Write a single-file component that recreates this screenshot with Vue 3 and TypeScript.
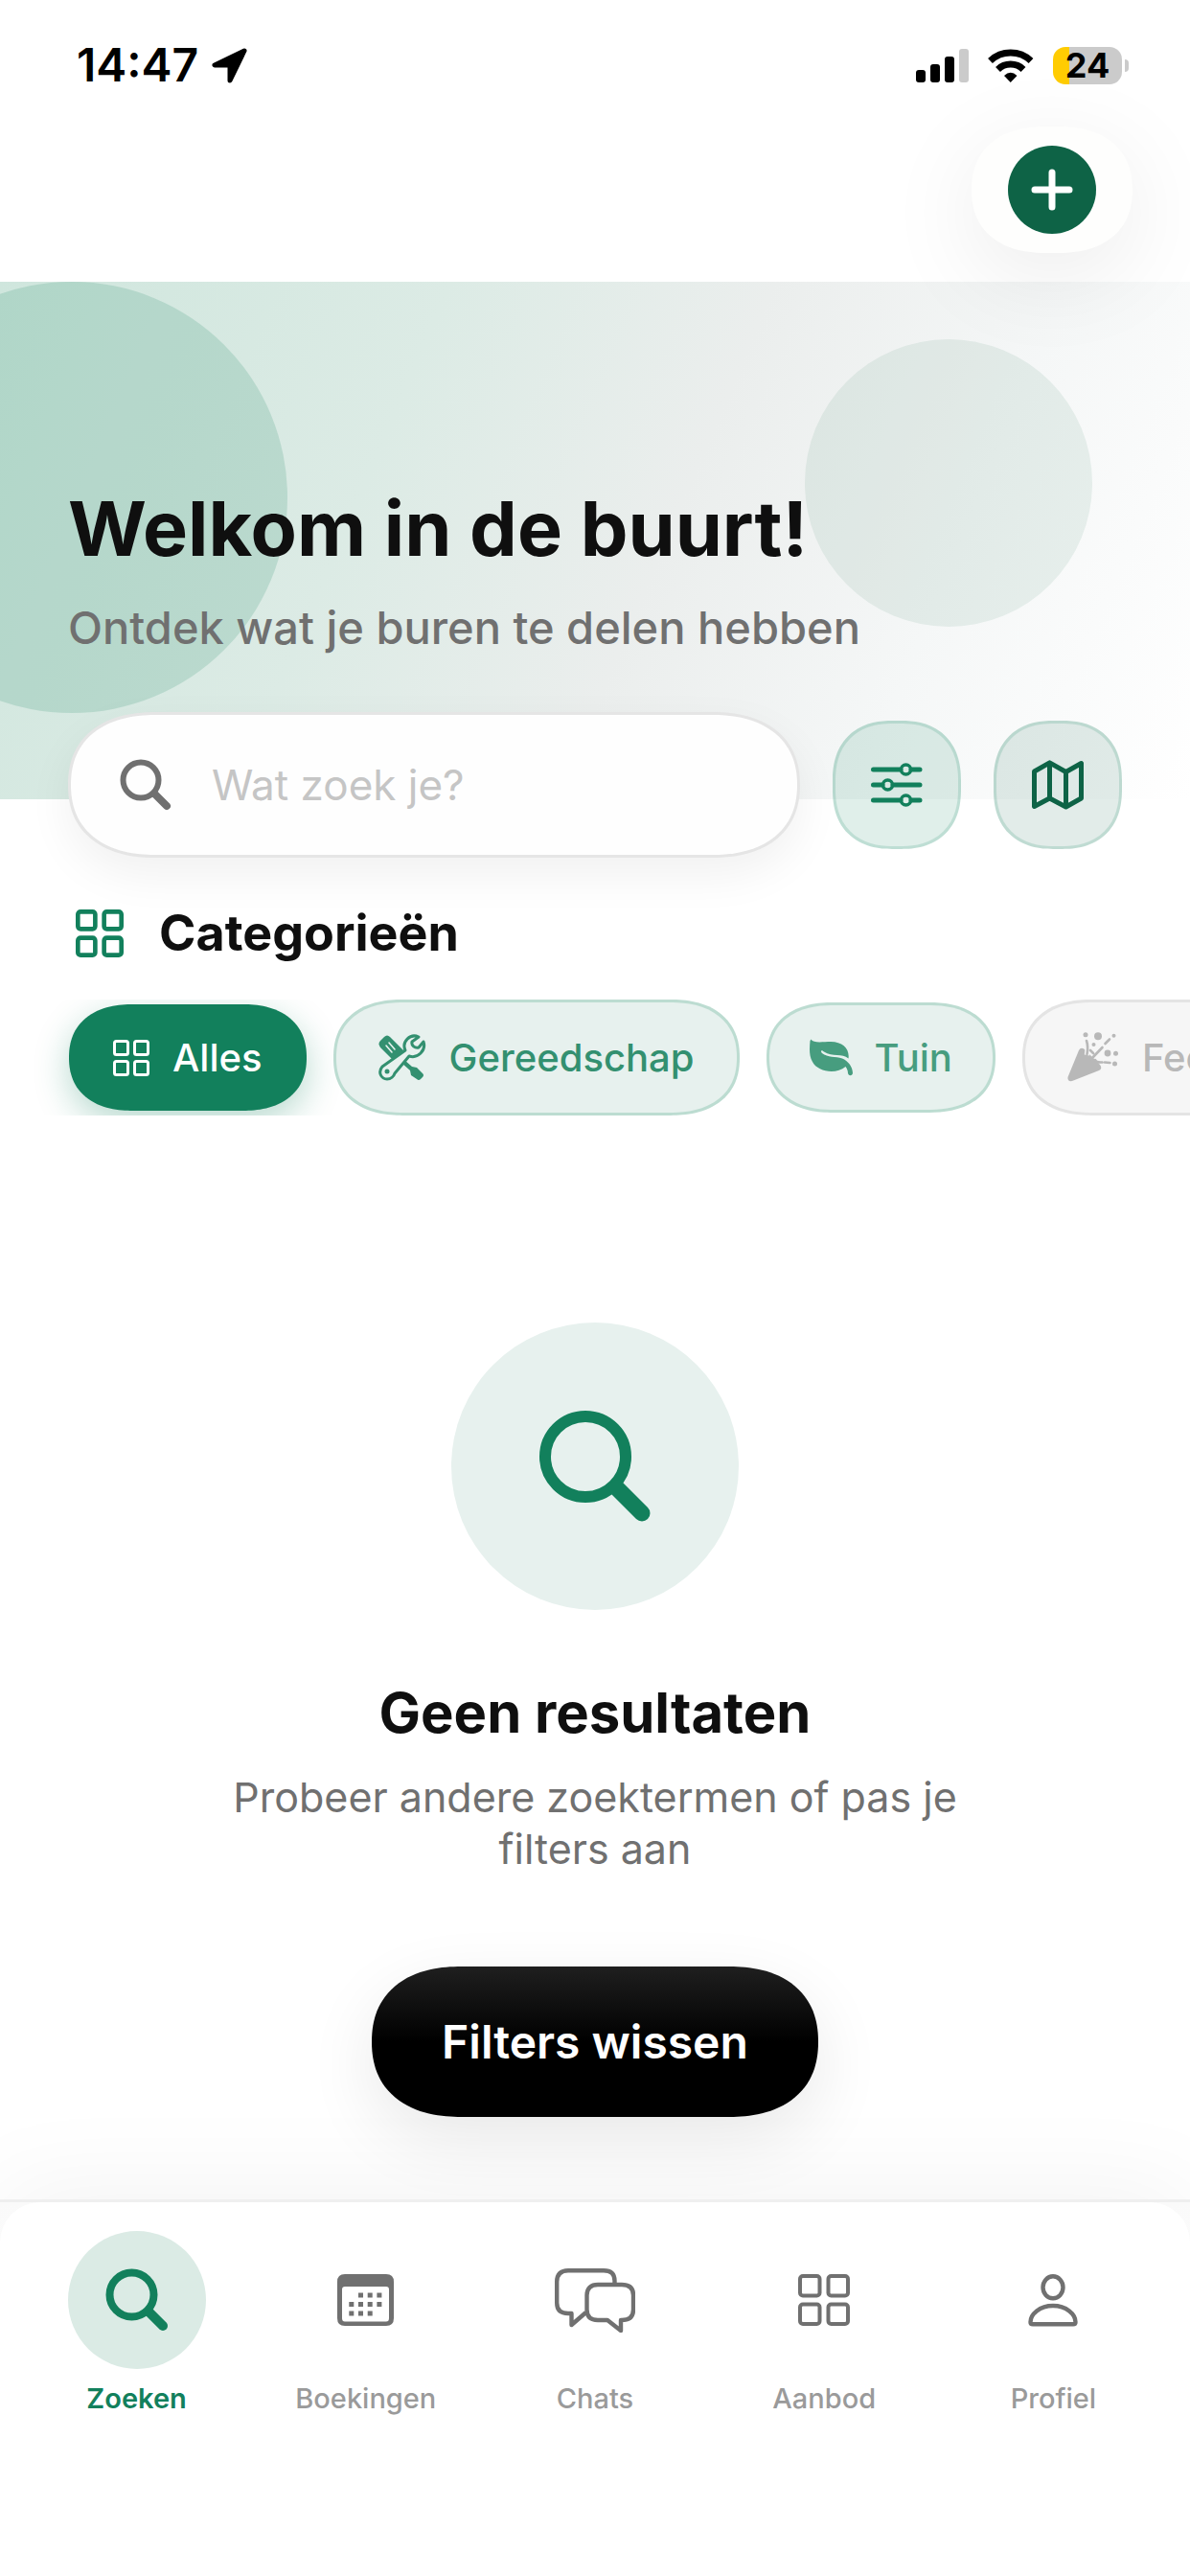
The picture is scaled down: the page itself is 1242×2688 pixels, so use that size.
<script setup lang="ts">
import { ref } from 'vue'

type Tone = 'active' | 'strong' | 'soft' | 'muted'
interface Chip { id: string; label: string; tone: Tone }
interface Tab { id: string; label: string }

const chips: Chip[] = [
  { id: 'all', label: 'Alles', tone: 'active' },
  { id: 'tools', label: 'Gereedschap', tone: 'strong' },
  { id: 'garden', label: 'Tuin', tone: 'soft' },
  { id: 'party', label: 'Feest', tone: 'muted' },
]

const tabs: Tab[] = [
  { id: 'search', label: 'Zoeken' },
  { id: 'bookings', label: 'Boekingen' },
  { id: 'chats', label: 'Chats' },
  { id: 'offers', label: 'Aanbod' },
  { id: 'profile', label: 'Profiel' },
]

const query = ref('')
const currentTab = ref('search')
</script>

<template>
  <div class="app">
    <div class="status">
      <div class="status-left">
        <span class="time">14:47</span>
        <svg width="37" height="37" viewBox="0 0 37 37" aria-hidden="true">
          <path d="M34 3 3 18H19V34Z" fill="#000" stroke="#000" stroke-width="5" stroke-linejoin="round" />
        </svg>
      </div>
      <div class="status-right">
        <svg width="55" height="36" viewBox="0 0 55 36" aria-hidden="true">
          <rect x="0" y="23" width="10" height="13" rx="3" />
          <rect x="15" y="17" width="10" height="19" rx="3" />
          <rect x="30" y="9" width="10" height="27" rx="3" />
          <rect x="45" y="1" width="10" height="35" rx="3" fill="#cbcbcb" />
        </svg>
        <svg width="48" height="37" viewBox="0 0 48 37" aria-hidden="true">
          <g fill="none" stroke="#000" stroke-width="7">
            <path d="M2.500 13.500A31 31 0 0 1 45 13.500" />
            <path d="M10.500 22.500A19 19 0 0 1 37 22.500" />
          </g>
          <path d="M17 29Q23.700 22.500 30.500 29L23.700 36Z" />
        </svg>
        <div class="battery"><span class="level">24</span></div>
      </div>
    </div>

    <header class="topbar">
      <button class="add" type="button" aria-label="Toevoegen">
        <span class="add-disc">
          <svg width="44" height="44" viewBox="0 0 44 44" aria-hidden="true">
            <path d="M22 4V40M4 22H40" stroke="#fff" stroke-width="7" stroke-linecap="round" />
          </svg>
        </span>
      </button>
    </header>

    <main class="main">
      <section class="hero">
        <span class="blob blob-left"></span>
        <span class="blob blob-right"></span>
        <h1>Welkom in de buurt!</h1>
        <p class="lead">Ontdek wat je buren te delen hebben</p>
        <form class="search-row" @submit.prevent>
          <label class="search" for="query">
            <svg width="54" height="54" viewBox="0 0 54 54" aria-hidden="true">
              <circle cx="22" cy="22" r="18.500" fill="none" stroke="#707070" stroke-width="6" />
              <path d="M37 37 49 49" stroke="#707070" stroke-width="8" stroke-linecap="round" />
            </svg>
            <input id="query" v-model="query" type="text" placeholder="Wat zoek je?" aria-label="Zoeken" />
          </label>
          <button class="square square-filter" type="button" aria-label="Filters">
            <svg width="54" height="46" viewBox="0 0 54 46" aria-hidden="true">
              <g fill="none" stroke="#12805c" stroke-width="5" stroke-linecap="round">
                <path d="M2.500 7H31M42 7H51M2.500 23H12M23 23H51M2.500 39H31M42 39H51" />
                <g stroke-width="3.500">
                  <circle cx="36.500" cy="7" r="5" />
                  <circle cx="17.500" cy="23" r="5" />
                  <circle cx="36.500" cy="39" r="5" />
                </g>
              </g>
            </svg>
          </button>
          <button class="square square-map" type="button" aria-label="Kaart">
            <svg width="54" height="52" viewBox="0 0 54 52" aria-hidden="true">
              <path d="M2.500 12 18.500 2.800 35.500 12.500 51.500 3.500V40L35.500 49 18.500 40 2.500 48.500ZM18.500 3V40M35.500 12V49" fill="none" stroke="#0e6346" stroke-width="5" stroke-linejoin="round" />
            </svg>
          </button>
        </form>
      </section>

      <section class="categories">
        <h2>
          <svg width="50" height="50" viewBox="0 0 54 54" aria-hidden="true">
            <g fill="none" stroke="#12805c" stroke-width="5">
              <rect x="2.500" y="2.500" width="19.500" height="19.500" rx="3" />
              <rect x="32" y="2.500" width="19.500" height="19.500" rx="3" />
              <rect x="2.500" y="32" width="19.500" height="19.500" rx="3" />
              <rect x="32" y="32" width="19.500" height="19.500" rx="3" />
            </g>
          </svg>
          <span>Categorieën</span>
        </h2>
        <div class="chips">
          <button v-for="chip in chips" :key="chip.id" type="button" class="chip" :class="chip.tone">
            <svg v-if="chip.id === 'all'" width="38" height="38" viewBox="0 0 38 38" aria-hidden="true">
              <g fill="none" stroke="currentColor" stroke-width="3">
                <rect x="1.500" y="1.500" width="14" height="14" rx="2" />
                <rect x="22.500" y="1.500" width="14" height="14" rx="2" />
                <rect x="1.500" y="22.500" width="14" height="14" rx="2" />
                <rect x="22.500" y="22.500" width="14" height="14" rx="2" />
              </g>
            </svg>
            <svg v-else-if="chip.id === 'tools'" width="50" height="49" viewBox="0 0 50 49" aria-hidden="true">
              <path d="M2 7 6 3Q9 0 12 3L26 17 15 27 2 14Q-1 10 2 7Z" fill="currentColor" />
              <path d="M8 12 14 19M11 9 17 16" stroke="#e7f1ee" stroke-width="1.600" stroke-linecap="round" />
              <path d="M27 27 35 34 40 35 46 41Q48 43 46 45L44 47Q42 49 40 47L34 43 33 38 24 30Z" fill="currentColor" />
              <path d="M42 3C33-1 24 8 28 17L4 34C-1 40 3 47 9 47 13 47 16 44 17 41L32 23C41 26 50 17 47 8L42 14C38 15 34 12 35 8Z" fill="#e7f1ee" stroke="currentColor" stroke-width="3" stroke-linejoin="round" />
              <circle cx="9" cy="39" r="2.500" fill="currentColor" />
            </svg>
            <svg v-else-if="chip.id === 'garden'" width="46" height="39" viewBox="0 0 46 39" aria-hidden="true">
              <path d="M1.500.5C4 5 14 3 22 3 35 3 42 11 40.500 20.500 34 15 24 19 15 13.500 12 11 11 13 13 15 19 20 27 18 34 20.500 40 23 45 29 45 36 44 39 41 39 40 36 40 33 39 31 37.500 29 27 38 8 34 3 24-1 17 0 9 .5 2Z" fill="currentColor" />
            </svg>
            <svg v-else width="54" height="53" viewBox="0 0 54 53" aria-hidden="true">
              <path d="M12 19Q14 15 18 18L34 34Q37 38 33 40L5 51Q0 52 .5 47Z" fill="currentColor" />
              <path d="M20 8.500Q22 14 20.500 24" fill="none" stroke="#f6f6f6" stroke-width="5.500" />
              <g fill="none" stroke="currentColor" stroke-width="2.600" stroke-linecap="round">
                <path d="M20 9Q22 15 20.500 23M24 19 27 22M25 28 36.500 16M39.500 12 44 7.500M29 29Q30 32 36.500 31.500M39 31.500 44.500 32" />
              </g>
              <g fill="currentColor">
                <circle cx="19" cy="2.800" r="2.500" /><circle cx="32" cy="4.200" r="4" />
                <circle cx="48.500" cy="3.800" r="2" /><circle cx="27.500" cy="13" r="2" />
                <circle cx="42" cy="22" r="3.400" /><circle cx="50.500" cy="22.300" r="2.500" />
                <circle cx="49.500" cy="33" r="2.500" />
              </g>
            </svg>
            <span>{{ chip.label }}</span>
          </button>
        </div>
      </section>

      <section class="empty">
        <div class="empty-disc">
          <svg width="118" height="118" viewBox="0 0 118 118" aria-hidden="true">
            <circle cx="49" cy="49" r="42" fill="none" stroke="#12805c" stroke-width="12" />
            <path d="M82 82 108 108" stroke="#12805c" stroke-width="17" stroke-linecap="round" />
          </svg>
        </div>
        <h3>Geen resultaten</h3>
        <p>Probeer andere zoektermen of pas je filters aan</p>
        <button class="clear" type="button">Filters wissen</button>
      </section>
    </main>

    <nav class="tabbar">
      <div class="tabs">
        <button
          v-for="tab in tabs" :key="tab.id" type="button" class="tab"
          :class="{ current: tab.id === currentTab }" @click="currentTab = tab.id"
        >
          <span class="tab-icon">
            <svg v-if="tab.id === 'search'" width="66" height="66" viewBox="0 0 66 66" aria-hidden="true">
              <circle cx="27.500" cy="27.500" r="23" fill="none" stroke="currentColor" stroke-width="8" />
              <path d="M46 46 60 60" stroke="currentColor" stroke-width="10" stroke-linecap="round" />
            </svg>
            <svg v-else-if="tab.id === 'bookings'" width="59" height="54" viewBox="0 0 59 54" aria-hidden="true">
              <path fill-rule="evenodd" d="M8 0H51Q59 0 59 8V46Q59 54 51 54H8Q0 54 0 46V8Q0 0 8 0ZM8 13Q5 13 5 16V46Q5 49.500 8 49.500H51Q54 49.500 54 46V16Q54 13 51 13Z" fill="currentColor" />
              <g fill="none" stroke="currentColor" stroke-width="5" stroke-dasharray="5 4.700">
                <path d="M22 22H47" /><path d="M12.300 31.500H47" /><path d="M12.300 41H37" />
              </g>
            </svg>
            <svg v-else-if="tab.id === 'chats'" width="84" height="67" viewBox="0 0 84 67" aria-hidden="true">
              <g fill="none" stroke="currentColor" stroke-width="4.400" stroke-linejoin="round">
                <path d="M62.500 15V13Q62.500 2.200 51 2.200H14Q2.200 2.200 2.200 14V36Q2.200 47 14 47H17.500V59L32.500 46" />
                <path d="M45 17H70Q82 17 82 28V43Q82 54 70 54H69V65L55 54H45Q33.500 54 33.500 43V28Q33.500 17 45 17Z" />
              </g>
            </svg>
            <svg v-else-if="tab.id === 'offers'" width="54" height="54" viewBox="0 0 54 54" aria-hidden="true">
              <g fill="none" stroke="currentColor" stroke-width="4">
                <rect x="2" y="2" width="20.500" height="20.500" rx="3" />
                <rect x="31.500" y="2" width="20.500" height="20.500" rx="3" />
                <rect x="2" y="31.500" width="20.500" height="20.500" rx="3" />
                <rect x="31.500" y="31.500" width="20.500" height="20.500" rx="3" />
              </g>
            </svg>
            <svg v-else width="52" height="55" viewBox="0 0 52 55" aria-hidden="true">
              <g fill="none" stroke="currentColor" stroke-width="4.400">
                <ellipse cx="26" cy="13.800" rx="10.500" ry="11.500" />
                <path d="M26 33C12 33 2.500 42 2.500 50Q2.500 52.300 5 52.300H47Q49.500 52.300 49.500 50C49.500 42 40 33 26 33Z" />
              </g>
            </svg>
          </span>
          <span class="tab-label">{{ tab.label }}</span>
        </button>
      </div>
    </nav>
  </div>
</template>

<style>
body { background: #fff; }
</style>

<style scoped>
.app {
  display: flex;
  flex-direction: column;
  min-height: 100vh;
  overflow: hidden;
  background: #fff;
  color: #0f0f0f;
  font-family: Inter, "Liberation Sans", sans-serif;
}
.app *, .app { box-sizing: border-box; }
button {
  border: 0;
  padding: 0;
  background: none;
  font: inherit;
  color: inherit;
  cursor: pointer;
}
svg { display: block; flex: none; }
h1, h2, h3, p { margin: 0; }

.status {
  display: flex;
  align-items: center;
  justify-content: space-between;
  height: 132px;
  padding: 4px 64px 0 80px;
}
.status-left { display: flex; align-items: center; gap: 14px; }
.time { font-size: 48px; line-height: 56px; font-weight: 600; color: #000; }
.status-right { display: flex; align-items: center; gap: 20px; }
.battery {
  position: relative;
  width: 72px;
  height: 39px;
  border-radius: 13px;
  background: linear-gradient(90deg, #ffcc02 17px, #cbcbcb 17px);
  text-align: center;
  margin-right: 7px;
}
.battery::after {
  content: "";
  position: absolute;
  left: 75px;
  top: 13px;
  width: 4px;
  height: 13px;
  border-radius: 0 6px 6px 0;
  background: #cbcbcb;
}
.level { font-size: 36px; line-height: 39px; font-weight: 700; color: #000; }

.topbar {
  position: relative;
  z-index: 1;
  display: flex;
  justify-content: flex-end;
  padding: 0 60px 30px;
}
.add {
  display: flex;
  align-items: center;
  justify-content: center;
  width: 168px;
  height: 132px;
  border-radius: 70px / 66px;
  background: #fefefd;
  box-shadow: 0 24px 100px rgba(0, 0, 0, 0.08);
}
.add-disc {
  display: flex;
  align-items: center;
  justify-content: center;
  width: 92px;
  height: 92px;
  border-radius: 50%;
  background: #0e6346;
}

.main { flex: 1; }
.hero {
  position: relative;
  padding: 207px 71px 0;
  background: linear-gradient(113deg, #cfe6dd 0%, #dcebe5 32%, #ebeeed 55%, #f5f7f7 76%, #fff 100%) 0 0 / 100% 540px no-repeat;
}
.blob { position: absolute; border-radius: 50%; }
.blob-left { left: -150px; top: 0; width: 450px; height: 450px; background: rgba(18, 128, 92, 0.16); }
.blob-right { right: 102px; top: 60px; width: 300px; height: 300px; background: rgba(14, 99, 70, 0.08); }
h1 { position: relative; font-size: 79px; line-height: 100px; font-weight: 700; white-space: nowrap; }
.lead { position: relative; margin-top: 24px; font-size: 47px; line-height: 60px; font-weight: 500; color: #707070; }
.search-row { position: relative; display: flex; align-items: center; gap: 34px; margin-top: 58px; }
.search {
  flex: 1;
  display: flex;
  align-items: center;
  gap: 42px;
  min-width: 0;
  height: 152px;
  padding: 0 51px;
  border: 3px solid #e5e5e5;
  border-radius: 80px / 76px;
  background: #fefefe;
  box-shadow: 0 18px 48px rgba(0, 0, 0, 0.06);
}
.search input {
  flex: 1;
  min-width: 0;
  border: 0;
  padding: 0;
  background: none;
  outline: none;
  font: inherit;
  font-size: 44px;
  line-height: 60px;
  color: #0f0f0f;
}
.search input::placeholder { color: #c5c5c5; opacity: 1; }
.square {
  display: flex;
  align-items: center;
  justify-content: center;
  flex: none;
  width: 134px;
  height: 134px;
  border: 3px solid rgba(18, 128, 92, 0.16);
  border-radius: 54px;
}
.square-filter { background: rgba(18, 128, 92, 0.13); }
.square-map { background: rgba(14, 99, 70, 0.12); }

.categories { padding-top: 47px; }
h2 {
  display: flex;
  align-items: center;
  gap: 37px;
  padding: 0 79px;
  font-size: 52px;
  line-height: 64px;
  font-weight: 700;
}
.chips {
  display: flex;
  align-items: center;
  gap: 28px;
  height: 121px;
  margin-top: 37px;
  padding-left: 72px;
  overflow: hidden;
}
.chip {
  display: flex;
  align-items: center;
  flex: none;
  gap: 24px;
  height: 121px;
  padding: 0 44px;
  border: 3px solid #bcdcd1;
  border-radius: 62px / 60px;
  background: #e7f1ee;
  font-size: 40px;
  line-height: 48px;
  font-weight: 500;
  white-space: nowrap;
}
.chip.active {
  height: 111px;
  padding: 0 46px;
  border: 0;
  background: #12805c;
  color: #fff;
  box-shadow: 0 12px 36px rgba(18, 128, 92, 0.3);
}
.chip.strong { color: #339070; }
.chip.soft { gap: 22px; height: 115px; padding: 0 42px; color: #479d7f; }
.chip.muted { border-color: #e4e4e4; background: #f6f6f6; color: #b8b8b8; }

.empty {
  display: flex;
  flex-direction: column;
  align-items: center;
  padding: 216px 72px 0;
  text-align: center;
}
.empty-disc {
  display: flex;
  align-items: center;
  justify-content: center;
  width: 300px;
  height: 300px;
  border-radius: 50%;
  background: #e7f1ee;
}
h3 { margin-top: 71px; font-size: 58px; line-height: 72px; font-weight: 700; }
.empty p { max-width: 800px; margin-top: 25px; font-size: 43px; line-height: 54px; color: #707070; }
.clear {
  height: 157px;
  margin-top: 96px;
  padding: 0 73px;
  border-radius: 84px / 79px;
  background: linear-gradient(#1f1f1f, #000 50%);
  box-shadow: 0 24px 72px rgba(0, 0, 0, 0.09);
  font-size: 48px;
  line-height: 60px;
  font-weight: 600;
  color: #fff;
}

.tabbar {
  border-top: 3px solid #efefef;
  background: linear-gradient(#fafafa, #fff 240px);
  box-shadow: 0 -10px 100px rgba(0, 0, 0, 0.05);
}
.tabs {
  display: flex;
  padding: 30px 23px 165px;
  border-radius: 42px 42px 0 0;
  background: #fff;
}
.tab { flex: 1; display: flex; flex-direction: column; align-items: center; gap: 11px; color: #707070; }
.tab-icon {
  display: flex;
  align-items: center;
  justify-content: center;
  width: 144px;
  height: 144px;
  border-radius: 50%;
}
.tab-label { font-size: 29px; line-height: 40px; font-weight: 500; color: #9a9a9a; }
.tab.current { color: #12805c; }
.tab.current .tab-icon { background: #dbebe5; }
.tab.current .tab-label { font-weight: 600; color: #12805c; }

/* Continuous corners where the browser can draw them */
@supports (corner-shape: superellipse(1.2)) {
  .add, .search, .square, .chip, .clear { corner-shape: superellipse(1.2); }
  .add { border-radius: 78px / 66px; }
  .search { border-radius: 92px / 76px; }
  .square { border-radius: 62px; }
  .chip { border-radius: 72px / 60px; }
  .clear { border-radius: 94px / 79px; }
}
</style>
